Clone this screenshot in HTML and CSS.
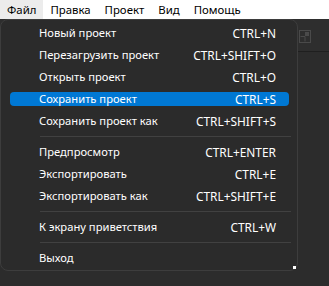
FILE: index.html
```html
<!DOCTYPE html>
<html lang="ru">
<head>
<meta charset="utf-8">
<link rel="stylesheet" href="styles.css">
</head>
<body>
<div class="app">
  <nav class="menubar">
    <span class="mb-item active">Файл</span>
    <span class="mb-item">Правка</span>
    <span class="mb-item">Проект</span>
    <span class="mb-item">Вид</span>
    <span class="mb-item">Помощь</span>
  </nav>
  <div class="workspace">
    <div class="toolbar">
      <svg class="tb-icon" width="12" height="13" viewBox="0 0 12 13">
        <rect x="0.5" y="0.5" width="11" height="12" fill="none" stroke="#4a4a4a"/>
        <rect x="6" y="2" width="4" height="4" fill="#4a4a4a"/>
        <path d="M6 6.5H1.5M6 6.5V11.5" stroke="#4a4a4a" fill="none"/>
      </svg>
    </div>
    <div class="canvas"></div>
  </div>

  <div class="menu">
    <div class="item"><div class="inner"><span>Новый проект</span><span class="key">CTRL+N</span></div></div>
    <div class="item"><div class="inner"><span>Перезагрузить проект</span><span class="key">CTRL+SHIFT+O</span></div></div>
    <div class="item"><div class="inner"><span>Открыть проект</span><span class="key">CTRL+O</span></div></div>
    <div class="item selected"><div class="inner"><span>Сохранить проект</span><span class="key">CTRL+S</span></div></div>
    <div class="item"><div class="inner"><span>Сохранить проект как</span><span class="key">CTRL+SHIFT+S</span></div></div>
    <div class="sep"></div>
    <div class="item"><div class="inner"><span>Предпросмотр</span><span class="key">CTRL+ENTER</span></div></div>
    <div class="item"><div class="inner"><span>Экспортировать</span><span class="key">CTRL+E</span></div></div>
    <div class="item"><div class="inner"><span>Экспортировать как</span><span class="key">CTRL+SHIFT+E</span></div></div>
    <div class="sep"></div>
    <div class="item"><div class="inner"><span>К экрану приветствия</span><span class="key">CTRL+W</span></div></div>
    <div class="sep"></div>
    <div class="item"><div class="inner"><span>Выход</span><span class="key"></span></div></div>
    <div class="grip"></div>
  </div>
</div>
</body>
</html>
```
FILE: styles.css
```css
* { box-sizing: border-box; }
html, body { margin: 0; padding: 0; }
body {
  width: 329px;
  height: 286px;
  overflow: hidden;
  background: #2d2d2d;
  font-family: "Noto Sans", "Open Sans", sans-serif;
  font-size: 11.2px;
}
.app {
  position: relative;
  width: 329px;
  height: 286px;
  display: flex;
  flex-direction: column;
}
.menubar {
  height: 19px;
  background: #ffffff;
  display: flex;
  align-items: stretch;
  color: #000;
  font-size: 11.4px;
}
.mb-item {
  padding: 0 7px;
  line-height: 19px;
}
.mb-item.active { background: #ececec; }
.workspace {
  flex: 1;
  display: flex;
  flex-direction: column;
  background: #2e2e2e;
}
.toolbar {
  height: 33px;
  border-bottom: 1px solid #1f1f1f;
  display: flex;
  justify-content: flex-end;
  padding: 11px 18px 0 0;
}
.canvas { flex: 1; background: #2c2c2c; }
.menu {
  position: absolute;
  left: 0;
  top: 19px;
  width: 298px;
  height: 252px;
  background: #2b2b2b;
  border: 1px solid #3d3d3d;
  border-radius: 8px;
  padding: 2px 0 1px;
  color: #ffffff;
}
.item {
  height: 22px;
  padding: 4px 8px 4px 9px;
}
.inner {
  height: 14px;
  display: flex;
  justify-content: space-between;
  align-items: center;
  padding: 0 13px 0 29px;
  border-radius: 4px;
  line-height: 14px;
  white-space: nowrap;
}
.key { font-size: 11.9px; }
.item.selected .inner { background: #0078d4; }
.sep {
  height: 9px;
  padding: 4px 6px 0 39px;
}
.sep::before {
  content: "";
  display: block;
  height: 1px;
  background: #414141;
}
.grip {
  position: absolute;
  right: 1px;
  bottom: 1px;
  width: 3px;
  height: 3px;
  background: #ffffff;
}
```
